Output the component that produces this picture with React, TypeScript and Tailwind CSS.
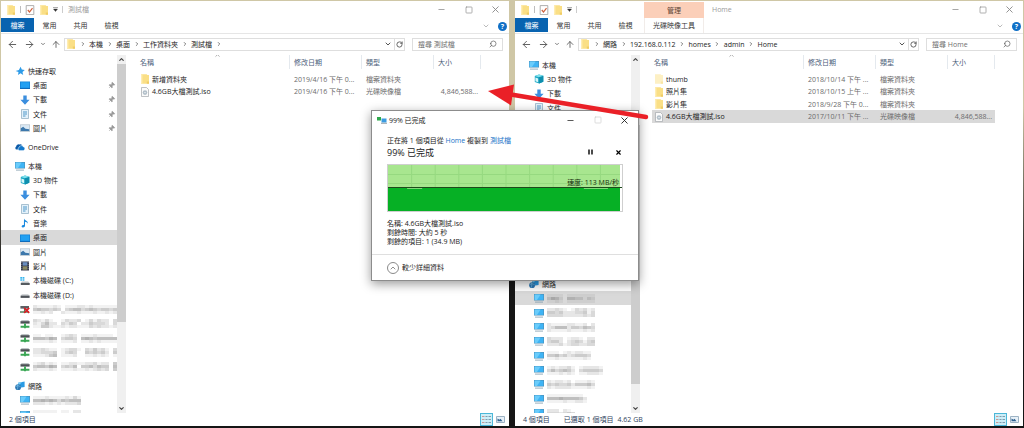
import type { ReactNode } from "react";
import { clsx } from "clsx";
import {
  ArrowLeft,
  ArrowRight,
  ArrowUp,
  ChevronDown,
  ChevronRight,
  ChevronUp,
  Minus,
  Pin,
  RotateCw,
  Search,
  Square,
  X,
} from "lucide-react";

type IconName =
  | "star"
  | "desktop"
  | "download"
  | "document"
  | "picture"
  | "onedrive"
  | "pc"
  | "cube"
  | "music"
  | "video"
  | "diskC"
  | "disk"
  | "netError"
  | "netDrive"
  | "network"
  | "folder"
  | "folderLight"
  | "iso"
  | "check";

interface NavItem {
  icon: IconName;
  label?: string;
  mosaic?: string[];
  pinned?: boolean;
  selected?: boolean;
}

interface FileRow {
  icon: IconName;
  name: string;
  date: string;
  type: string;
  size?: string;
  selected?: boolean;
}

interface ExplorerProps {
  title: string;
  context?: { group: string; tab: string };
  path: string[];
  trailingArrow?: boolean;
  groups: NavItem[][];
  navSpacing: string;
  scrollOffset: number;
  files: FileRow[];
  status: string[];
}

const icons: Record<IconName, ReactNode> = {
  star: (
    <path d="M5.6.8 6.8 3.6l3 .3-2.3 2 .7 3-2.6-1.6L3 9l.5-3L.6 5l3.3-1z" fill="#2d9be8" />
  ),
  desktop: (
    <>
      <rect x="0" y="1.5" width="10" height="7.5" fill="#1583d8" />
      <rect x="0.8" y="2.3" width="8.4" height="5.4" fill="#22a0f2" />
      <rect x="0" y="8.2" width="10" height="0.8" fill="#0d66b4" />
    </>
  ),
  download: <path d="M3.3.5h3.4v4.3H9.6L5 9.8.4 4.8h2.9z" fill="#3b8ede" />,
  document: (
    <>
      <path d="M1.5.5h7v9h-7z" fill="#e3f1fa" stroke="#8aa9bd" strokeWidth=".7" />
      <path d="M3 3h4M3 5h4M3 7h2.5" stroke="#3f8fc4" strokeWidth=".9" />
    </>
  ),
  picture: (
    <>
      <rect x=".3" y="1.8" width="9.4" height="6.8" fill="#dbe9f4" stroke="#a9b8c4" strokeWidth=".6" />
      <path d="M.8 7.9V5.2l2.4-1.5 2.2 2 3.8.6v1.6z" fill="#3d78ac" />
    </>
  ),
  onedrive: (
    <>
      <path
        d="M3 7.6H1.6A1.6 1.6 0 0 1 1.2 4.6 2.4 2.4 0 0 1 4.4 2.4a2.6 2.6 0 0 1 2.8.9L4 5z"
        fill="#0a5aa8"
      />
      <path
        d="M4.4 8.6A1.7 1.7 0 0 1 4.2 5.300a2.100 2.100 0 0 1 3.900-.6 2 2 0 0 1 .3 3.900z"
        fill="#1479cc"
        stroke="#fff"
        strokeWidth=".4"
      />
    </>
  ),
  pc: (
    <>
      <rect x="0" y="1" width="10" height="6.5" fill="#4a8fb8" />
      <rect x=".6" y="1.6" width="8.8" height="5.3" fill="#3fb4f5" />
      <path d="M.6 1.6h6L3 6.9H.6z" fill="#6accfb" />
      <path d="M1 9.1h8" stroke="#7f9bab" strokeWidth=".8" />
    </>
  ),
  cube: (
    <>
      <path d="M.8 2 5 .5l4.3 1.3v6L5.2 9.6.8 8z" fill="#18a6c4" />
      <path d="M4.5 3.2 9.3 1.8v6L5 9.6z" fill="#0e8fae" />
      <path d="M.8 2 5 .5l4.3 1.3-4.6 1.4z" fill="#7ee0ec" />
      <path d="M1.4 3.6 4.2 4.4v3.8L1.4 7.2z" fill="#d6f7fa" />
    </>
  ),
  music: (
    <path d="M4 .5c.6 2 4.2 2 3.9 5.2C7.3 4.3 6 3.9 5 3.8v4C5 9 3.8 9.7 2.7 9.5 1 9.2 1.3 7 3.9 7z" fill="#1a8ae0" />
  ),
  video: (
    <>
      <rect x="1" y=".5" width="8" height="9" fill="#34394a" />
      <rect x="2.7" y="1.2" width="4.6" height="3.4" fill="#6a8ec0" />
      <rect x="2.7" y="5.3" width="4.6" height="3.4" fill="#8c8b64" />
      <path d="M1.8 1v8M8.2 1v8" stroke="#aab" strokeWidth=".6" strokeDasharray="1 1" />
    </>
  ),
  diskC: (
    <>
      <path d="M.3 1h1.8v1.8H.3zM2.6 1h1.8v1.8H2.6zM.3 3.3h1.8v1.5H.3zM2.6 3.3h1.8v1.5H2.6z" fill="#36b5ee" />
      <path d="M1.8 5.5h6.4l1.5 1.7H.8z" fill="#bcc1c4" />
      <rect x=".8" y="7" width="8.9" height="2" fill="#555b60" />
    </>
  ),
  disk: (
    <>
      <path d="M1.8 4.2h6.4l1.5 1.7H.6z" fill="#c6cacd" />
      <rect x=".6" y="5.7" width="9" height="2.2" fill="#4f5459" />
    </>
  ),
  netError: (
    <>
      <rect x=".4" y="2" width="8.6" height="2.6" fill="#5c6165" />
      <path d="M0 8h9M4.6 4.6V8" stroke="#53825d" strokeWidth="1.3" />
      <path d="m4.2 3.8 5 5m0-5-5 5" stroke="#d81f26" strokeWidth="1.7" />
    </>
  ),
  netDrive: (
    <>
      <path d="M1.6 1h6.800l1.200 1.400H.5z" fill="#bfc4c6" />
      <rect x=".5" y="2.2" width="9.1" height="2.4" fill="#4b5054" />
      <path d="M.6 7.800h8.800M5 4.600V9.300" stroke="#39a653" strokeWidth="1.9" />
    </>
  ),
  network: (
    <>
      <path d="M3.2 1.7 9.6.6v5.3L3.2 6.9z" fill="#2b9be4" />
      <path d="M3.2 1.7 7 1.1 3.2 5z" fill="#7fd0f8" />
      <circle cx="3.1" cy="6.2" r="2.9" fill="#2d77b3" />
      <path d="M1 5.4c1.8-1.5 3-.4 4.6.4M2.6 3.6c.4 2 .2 3.6-.5 5" stroke="#7fc8ef" strokeWidth=".7" fill="none" />
    </>
  ),
  folder: (
    <>
      <path d="M1 .3h5.600l.8.8H9v8.600H1z" fill="#fadf86" />
      <path d="M1 .3h1.400v9.400H1z" fill="#ffedb3" />
      <path d="M6.800 7.500H9v2.200H6.800z" fill="#f0cc66" />
    </>
  ),
  folderLight: (
    <>
      <path d="M1 .3h5.600l.8.8H9v8.600H1z" fill="#fdf0c4" />
      <path d="M6.800 7.500H9v2.200H6.800z" fill="#f9e4a4" />
    </>
  ),
  iso: (
    <>
      <path d="M1.5.5h5l2 2v7h-7z" fill="#fbfbfb" stroke="#a3a8ac" strokeWidth=".7" />
      <circle cx="5" cy="5.6" r="2.3" fill="#b3c0ca" />
      <circle cx="5" cy="5.6" r=".7" fill="#fff" />
    </>
  ),
  check: (
    <>
      <path d="M1.2.6h7.6v9H1.2z" fill="#fff" stroke="#9a9a9a" strokeWidth=".8" />
      <path d="m2.8 5 1.7 2 3-3.8" fill="none" stroke="#d0603c" strokeWidth="1.2" />
    </>
  ),
};

function Icon({ name, className = "size-[10px]" }: { name: IconName; className?: string }) {
  return (
    <svg viewBox="0 0 10 10" className={clsx("shrink-0", className)} aria-hidden="true">
      {icons[name]}
    </svg>
  );
}

// One digit per cell, 0 is white and 9 is the darkest grey.
function Mosaic({ rows }: { rows: string[] }) {
  const columns = rows[0].length;
  return (
    <svg width={columns * 4} height={rows.length * 3} className="shrink-0" aria-hidden="true">
      {rows.map((row, y) =>
        row
          .split("")
          .map((cell, x) => (
            <rect key={`${x}-${y}`} x={x * 4} y={y * 3} width="4" height="3" fill="#555" opacity={Number(cell) * 0.075} />
          )),
      )}
    </svg>
  );
}

const thisPc: NavItem[] = [
  { icon: "pc", label: "本機" },
  { icon: "cube", label: "3D 物件" },
  { icon: "download", label: "下載" },
  { icon: "document", label: "文件" },
  { icon: "music", label: "音樂" },
  { icon: "desktop", label: "桌面", selected: true },
  { icon: "picture", label: "圖片" },
  { icon: "video", label: "影片" },
  { icon: "diskC", label: "本機磁碟 (C:)" },
  { icon: "disk", label: "本機磁碟 (D:)" },
  { icon: "netError", mosaic: ["211112101112212111111", "454434303455345434434", "112120021112111211212"] },
  { icon: "netDrive", mosaic: ["321310013223013132203", "213522032430224333203", "114421121221113232212"] },
  { icon: "netDrive", mosaic: ["110110012320111211110", "555465034430565455555", "111121011120112121111"] },
  { icon: "netDrive", mosaic: ["223211012331032423103", "223334013430043434204", "111245011120011212101"] },
  { icon: "netDrive", mosaic: ["123121011221122312204", "455465034350445354405", "211121011121121232304"] },
];

const localGroups: NavItem[][] = [
  [
    { icon: "star", label: "快速存取" },
    { icon: "desktop", label: "桌面", pinned: true },
    { icon: "download", label: "下載", pinned: true },
    { icon: "document", label: "文件", pinned: true },
    { icon: "picture", label: "圖片", pinned: true },
  ],
  [{ icon: "onedrive", label: "OneDrive" }],
  thisPc,
  [
    { icon: "network", label: "網路" },
    { icon: "pc", mosaic: ["111211112131", "556565354555", "222121212223"] },
    { icon: "pc", mosaic: ["111111011022", "333333322033", "111111111022"] },
  ],
];

const remoteGroups: NavItem[][] = [
  thisPc.slice(0, 4),
  [
    { icon: "network", label: "網路" },
    { icon: "pc", selected: true, mosaic: ["111101111111", "354204433132", "112101111111"] },
    { icon: "pc", mosaic: ["223210132312", "443422233413", "333322222323"] },
    { icon: "pc", mosaic: ["211112211202", "235552443543", "211112111212"] },
    { icon: "pc", mosaic: ["322201221022", "344202343134", "222312332233"] },
    { icon: "pc", mosaic: ["11101212211", "44534234443", "11211111121"] },
    { icon: "pc", mosaic: ["12122310122221", "35345420344443", "11121210112221"] },
    { icon: "pc", mosaic: ["212212011121", "434334244453", "212222111121"] },
    { icon: "pc", mosaic: ["1111111110", "5556555542", "1111211221"] },
    { icon: "pc", mosaic: ["22202100", "33323430", "12232210"] },
  ],
];

const localFiles: FileRow[] = [
  { icon: "folder", name: "新增資料夾", date: "2019/4/16 下午 0...", type: "檔案資料夾" },
  { icon: "iso", name: "4.6GB大檔測試.iso", date: "2019/4/16 下午 0...", type: "光碟映像檔", size: "4,846,588..." },
];

const remoteFiles: FileRow[] = [
  { icon: "folderLight", name: "thumb", date: "2018/10/14 下午 ...", type: "檔案資料夾" },
  { icon: "folder", name: "照片集", date: "2018/10/15 上午 ...", type: "檔案資料夾" },
  { icon: "folder", name: "影片集", date: "2018/9/28 下午 0...", type: "檔案資料夾" },
  {
    icon: "iso",
    name: "4.6GB大檔測試.iso",
    date: "2017/10/11 下午 ...",
    type: "光碟映像檔",
    size: "4,846,588...",
    selected: true,
  },
];

function WindowControls({ strong = false }: { strong?: boolean }) {
  const button = "flex h-full w-[27px] items-center justify-center";
  return (
    <div className={clsx("ml-auto flex h-full", strong ? "text-[#222222]" : "text-[#8a8a8a]")}>
      <button className={button} aria-label="最小化">
        <Minus size={9} strokeWidth={2} />
      </button>
      <button className={clsx(button, strong && "text-[#cccccc]")} aria-label="最大化">
        <Square size={8} strokeWidth={2} />
      </button>
      <button className={button} aria-label="關閉">
        <X size={11} strokeWidth={2} />
      </button>
    </div>
  );
}

function TitleBar({ title, context }: Pick<ExplorerProps, "title" | "context">) {
  return (
    <div className="flex h-[17px] shrink-0 items-center">
      <div className={clsx("flex items-center gap-1 pl-[5px]", context ? "w-[129px]" : "pr-[5px]")}>
        <Icon name="folder" />
        <span className="h-[7px] w-px bg-[#bdbdbd]" />
        <Icon name="check" />
        <Icon name="folder" />
        <svg viewBox="0 0 5 5" className="size-[5px]" aria-hidden="true">
          <path d="M0 .5h5M.5 2h4L2.5 4.5z" fill="#333" stroke="#333" strokeWidth=".4" />
        </svg>
        <span className="h-[7px] w-px bg-[#cccccc]" />
      </div>
      {context && (
        <div className="mr-2 flex h-4 w-[60px] items-center justify-center self-end bg-[#fbcfb9] text-[#5c4335]">
          {context.group}
        </div>
      )}
      <h1 className="text-[#9b9b9b]">{title}</h1>
      <WindowControls />
    </div>
  );
}

function Ribbon({ context }: Pick<ExplorerProps, "context">) {
  return (
    <div className="flex h-4 shrink-0 items-start border-b border-[#e6e6e6] text-[#333333]">
      <button className="h-[14px] w-[33px] bg-[#0863b0] text-white">檔案</button>
      {["常用", "共用", "檢視"].map((tab) => (
        <button key={tab} className="h-[14px] w-[31px]">
          {tab}
        </button>
      ))}
      {context && (
        <button className="ml-[3px] h-[15px] w-[60px] border-x border-[#f1ece9]">{context.tab}</button>
      )}
      <div className="ml-auto flex h-4 items-center gap-2 pr-0.5">
        <ChevronDown size={8} className="text-[#999999]" />
        <button
          className="flex size-[9px] items-center justify-center rounded-full bg-[#0f6fc6] font-bold text-white"
          aria-label="說明"
        >
          ?
        </button>
      </div>
    </div>
  );
}

function AddressRow({ title, path, trailingArrow }: Pick<ExplorerProps, "title" | "path" | "trailingArrow">) {
  const arrow = (
    <span className="flex w-[13px] justify-center text-[#555555]">
      <ChevronRight size={6} strokeWidth={3} />
    </span>
  );
  return (
    <div className="flex h-5 shrink-0 items-center pr-1.5 text-[#555555]">
      <button className="flex w-[22px] justify-center" aria-label="上一頁">
        <ArrowLeft size={11} />
      </button>
      <button className="flex w-3 justify-center" aria-label="下一頁">
        <ArrowRight size={11} />
      </button>
      <button className="flex w-4 justify-center" aria-label="最近的位置">
        <ChevronDown size={6} strokeWidth={3} />
      </button>
      <button className="flex w-[10px] justify-center" aria-label="上移一層">
        <ArrowUp size={11} />
      </button>
      <div className="ml-[3px] flex h-[13px] flex-1 items-center border border-[#dedede] pl-px">
        <Icon name="folder" />
        {path.map((part) => (
          <span key={part} className="flex items-center">
            {arrow}
            <a href="#" className="text-[#222222]">
              {part}
            </a>
          </span>
        ))}
        {trailingArrow && arrow}
        <button className="ml-auto flex w-3 justify-center" aria-label="先前的位置">
          <ChevronDown size={8} strokeWidth={3} />
        </button>
        <button
          className="flex h-full w-[10px] items-center justify-center border-l border-[#dedede]"
          aria-label="重新整理"
        >
          <RotateCw size={7} strokeWidth={3} />
        </button>
      </div>
      <label className="ml-[7px] flex h-[13px] w-[91px] items-center border border-[#dedede] px-[5px]">
        <input
          type="search"
          aria-label={`搜尋 ${title}`}
          placeholder={`搜尋 ${title}`}
          className="min-w-0 flex-1 outline-none placeholder:text-[#6f6f6f]"
        />
        <Search size={8} className="-scale-x-100" />
      </label>
    </div>
  );
}

function NavPane({ groups, navSpacing }: Pick<ExplorerProps, "groups" | "navSpacing">) {
  return (
    <nav className={clsx("flex w-[116px] shrink-0 flex-col overflow-hidden", navSpacing)}>
      {groups.map((group, g) => (
        <ul key={g}>
          {group.map((item, i) => (
            <li key={i} className="h-[14px] nth-[3n]:h-[15px]">
              <a
                href="#"
                aria-label={item.label ?? "網路位置"}
                className={clsx(
                  "flex h-full items-center gap-[3px] text-[#222222]",
                  i === 0 ? "pl-[14px]" : "pl-[19px]",
                  item.selected && "bg-[#d9d9d9]",
                )}
              >
                <Icon name={item.icon} />
                {item.label && <span className="whitespace-nowrap">{item.label}</span>}
                {item.mosaic && <Mosaic rows={item.mosaic} />}
                {item.pinned && <Pin size={7} className="mr-[2px] ml-auto rotate-45 fill-current text-[#9a9a9a]" />}
              </a>
            </li>
          ))}
        </ul>
      ))}
    </nav>
  );
}

function ScrollBar({ offset }: { offset: number }) {
  return (
    <div className="flex w-[9px] shrink-0 flex-col bg-[#f0f0f0] text-[#444444]">
      <button className="flex h-[9px] items-center justify-center" aria-label="向上捲動">
        <ChevronUp size={7} strokeWidth={4} />
      </button>
      <div className="min-h-0 flex-1">
        <div style={{ height: `${offset}%` }} />
        <div className="h-[76%] bg-[#cdcdcd]" />
      </div>
      <button className="flex h-[9px] items-center justify-center" aria-label="向下捲動">
        <ChevronDown size={7} strokeWidth={4} />
      </button>
    </div>
  );
}

function FileTable({ files }: { files: FileRow[] }) {
  const heading = "flex h-[14px] items-center border-r border-[#e4e9ee]";
  return (
    <div className="min-w-0 flex-1 pr-7 pl-3">
      <table className="w-full table-fixed border-collapse text-left">
        <colgroup>
          <col />
          <col className="w-[72px]" />
          <col className="w-[72px]" />
          <col className="w-[47px]" />
        </colgroup>
        <thead className="text-[#4c607a]">
          <tr className="h-[18px] align-top">
            <th className="p-0 font-normal">
              <div className={clsx(heading, "relative pl-0.5")}>
                名稱
                <ChevronUp size={7} className="absolute -top-[3px] left-1/2 text-[#777777]" />
              </div>
            </th>
            <th className="p-0 font-normal">
              <div className={clsx(heading, "pl-1")}>修改日期</div>
            </th>
            <th className="p-0 font-normal">
              <div className={clsx(heading, "pl-1")}>類型</div>
            </th>
            <th className="p-0 font-normal">
              <div className={clsx(heading, "pl-1")}>大小</div>
            </th>
          </tr>
        </thead>
        <tbody>
          {files.map((file) => (
            <tr
              key={file.name}
              className={clsx("h-3 whitespace-nowrap text-[#6b6b6b] even:h-[13px]", file.selected && "bg-[#d9d9d9]")}
            >
              <td className="p-0">
                <div className="flex items-center gap-0.5 pl-0.5 text-[#222222]">
                  <Icon name={file.icon} />
                  {file.name}
                </div>
              </td>
              <td className="p-0 pl-1">{file.date}</td>
              <td className="p-0 pl-1">{file.type}</td>
              <td className="p-0 pr-[3px] text-right">{file.size}</td>
            </tr>
          ))}
        </tbody>
      </table>
    </div>
  );
}

function StatusBar({ status }: { status: string[] }) {
  return (
    <footer className="flex h-[13px] shrink-0 items-center pl-2 text-[#2f435e]">
      {status.map((text, i) => (
        <span key={text} className={i === 0 ? "mr-[14px]" : "mr-1"}>
          {text}
        </span>
      ))}
      <div className="mr-1 ml-auto flex h-full items-center gap-[3px]">
        <button
          className="flex h-full w-[13px] items-center justify-center border border-[#4bb7d8] bg-[#cdeef7]"
          aria-label="詳細資料"
        >
          <svg viewBox="0 0 9 9" className="size-[9px]" aria-hidden="true">
            <path d="M0 1.500h2.500M0 4.500h2.500M0 7.500h2.500" stroke="#c99a96" />
            <path d="M3.500 1.500h2M3.500 4.500h2M3.500 7.500h2M6.500 1.500H9M6.500 4.500H9M6.500 7.500H9" stroke="#7d9db0" />
          </svg>
        </button>
        <button className="flex w-[9px] justify-center" aria-label="大圖示">
          <svg viewBox="0 0 9 7" className="h-[7px] w-[9px]" aria-hidden="true">
            <path d="M.5.5h8v6h-8z" fill="#e8f1f8" stroke="#9db3c4" />
            <path d="M1.5 5.2V2.5l2 1.2 1-1 2 2.5z" fill="#2f6290" />
          </svg>
        </button>
      </div>
    </footer>
  );
}

function Explorer(props: ExplorerProps) {
  return (
    <section className="flex min-h-0 min-w-0 flex-col bg-white" aria-label={props.title}>
      <TitleBar title={props.title} context={props.context} />
      <Ribbon context={props.context} />
      <AddressRow title={props.title} path={props.path} trailingArrow={props.trailingArrow} />
      <div className="mt-px flex min-h-0 flex-1 overflow-hidden">
        <NavPane groups={props.groups} navSpacing={props.navSpacing} />
        <ScrollBar offset={props.scrollOffset} />
        <FileTable files={props.files} />
      </div>
      <StatusBar status={props.status} />
    </section>
  );
}

function SpeedChart() {
  return (
    <div className="relative mt-[5px] h-12 border border-[#cfcfcf] bg-white">
      <svg viewBox="0 0 233 46" preserveAspectRatio="none" className="h-full w-full" aria-hidden="true">
        <rect width="231" height="46" fill="#a8e68f" />
        <path
          d="M23.5 0v23M47 0v23M70.5 0v23M94 0v23M117.5 0v23M141 0v23M164.5 0v23M188 0v23M211.5 0v23M0 9.500h231M0 18.500h231"
          stroke="#96d980"
          strokeWidth="1"
        />
        <rect y="23" width="231" height="23" fill="#06b025" />
        <path d="M19 23.500h15M195 23.500h24" stroke="#7fd87a" strokeWidth="1" />
        <path d="M0 22.500h233" stroke="#1d4a1b" strokeWidth="1" />
      </svg>
      <span className="absolute top-[13px] right-[3px] text-[#16300f]">速度: 113 MB/秒</span>
    </div>
  );
}

function CopyDialog() {
  return (
    <div
      role="dialog"
      aria-label="99% 已完成"
      className="absolute top-[110px] left-[371px] w-[268px] border border-[#8c8c8c] bg-white text-[#222222] shadow-[0_3px_10px_rgba(0,0,0,0.4)]"
    >
      <div className="flex h-[18px] items-center pl-[5px]">
        <svg viewBox="0 0 10 8" className="mr-0.5 h-2 w-[10px]" aria-hidden="true">
          <rect x="0" y="1" width="4" height="3.5" fill="#2fa84c" />
          <rect x="4.5" y="2.5" width="5" height="4" fill="#3b9be0" />
          <path d="M4 7.3h6" stroke="#7b8c98" strokeWidth=".8" />
        </svg>
        99% 已完成
        <WindowControls strong />
      </div>
      <div className="px-[15px] pt-[7px] pb-2">
        <p>
          正在將 1 個項目從{" "}
          <a href="#" className="text-[#1a73c8]">
            Home
          </a>{" "}
          複製到{" "}
          <a href="#" className="text-[#1a73c8]">
            測試檔
          </a>
        </p>
        <div className="mt-px flex items-center">
          <h2 className="text-[9px] leading-[13px]">99% 已完成</h2>
          <div className="ml-auto flex gap-[18px] text-black">
            <button className="flex w-[10px] justify-center" aria-label="暫停">
              <svg viewBox="0 0 5 6" className="h-[6px] w-[5px]" aria-hidden="true">
                <path d="M1 .5v5M4 .5v5" stroke="currentColor" strokeWidth="1.4" />
              </svg>
            </button>
            <button className="flex w-[10px] justify-center" aria-label="取消">
              <X size={7} strokeWidth={4} />
            </button>
          </div>
        </div>
        <SpeedChart />
        <div className="mt-[7px]">
          <p>名稱: 4.6GB大檔測試.iso</p>
          <p>剩餘時間: 大約 5 秒</p>
          <p>剩餘的項目: 1 (34.9 MB)</p>
        </div>
      </div>
      <div className="flex h-[26px] items-center border-t border-[#dfdfdf] px-[15px]">
        <button className="flex items-center gap-[3px]">
          <span className="flex size-3 items-center justify-center rounded-full border border-[#8a8a8a] text-[#555555]">
            <ChevronUp size={8} />
          </span>
          較少詳細資料
        </button>
      </div>
    </div>
  );
}

export default function App() {
  return (
    <main className="relative grid h-screen grid-cols-2 gap-1.5 overflow-hidden bg-linear-to-b from-[#cfc7a6] from-25% to-[#151515] to-65% px-px pt-px pb-0.5 font-['Open_Sans','Noto_Sans_CJK_TC',sans-serif] text-[7px] leading-[9px]">
      <Explorer
        title="測試檔"
        path={["本機", "桌面", "工作資料夾", "測試檔"]}
        trailingArrow
        groups={localGroups}
        navSpacing="gap-[5px] pt-[9px]"
        scrollOffset={0}
        files={localFiles}
        status={["2 個項目"]}
      />
      <Explorer
        title="Home"
        context={{ group: "管理", tab: "光碟映像工具" }}
        path={["網路", "192.168.0.112", "homes", "admin", "Home"]}
        groups={remoteGroups}
        navSpacing="gap-[162px] pt-[3px]"
        scrollOffset={18}
        files={remoteFiles}
        status={["4 個項目", "已選取 1 個項目", "4.62 GB"]}
      />
      <CopyDialog />
      <svg
        viewBox="0 0 164 46"
        className="pointer-events-none absolute top-[77px] left-[487px] h-[46px] w-[164px]"
        aria-hidden="true"
      >
        <path d="M24 17.500 159 40" stroke="#ea2027" strokeWidth="4.500" strokeLinecap="round" />
        <path d="M1 14 27 7.500 24 28.500z" fill="#ea2027" />
      </svg>
    </main>
  );
}
